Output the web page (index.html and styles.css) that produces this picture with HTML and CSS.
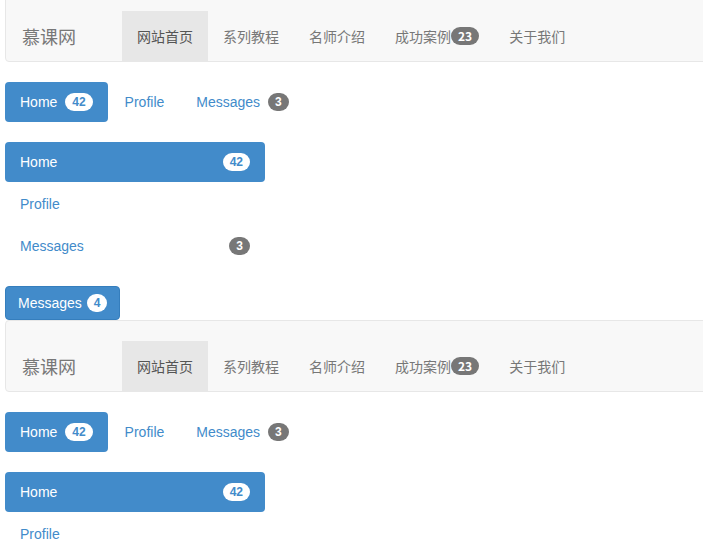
FILE: index.html
```html
<!DOCTYPE html>
<html lang="zh-CN">

<head>
    <meta charset="UTF-8">
    <meta name="viewport" content="width=device-width, initial-scale=1.0">
    <title>徽章</title>
    <link rel="stylesheet" href="styles.css">
</head>

<body>

    <nav class="navbar first">
        <a class="brand" href="#">慕课网</a>
        <ul class="navbar-nav">
            <li class="active"><a href="#">网站首页</a></li>
            <li><a href="#">系列教程</a></li>
            <li><a href="#">名师介绍</a></li>
            <li><a href="#">成功案例<span class="badge">23</span></a></li>
            <li><a href="#">关于我们</a></li>
        </ul>
    </nav>

    <ul class="pills">
        <li class="active"><a href="#">Home <span class="badge">42</span></a></li>
        <li><a href="#">Profile</a></li>
        <li><a href="#">Messages <span class="badge">3</span></a></li>
    </ul>

    <ul class="pills stacked">
        <li class="active"><a href="#">Home <span class="badge">42</span></a></li>
        <li><a href="#">Profile</a></li>
        <li><a href="#">Messages <span class="badge">3</span></a></li>
    </ul>

    <button class="btn" type="button">Messages <span class="badge">4</span></button>

    <nav class="navbar">
        <a class="brand" href="#">慕课网</a>
        <ul class="navbar-nav">
            <li class="active"><a href="#">网站首页</a></li>
            <li><a href="#">系列教程</a></li>
            <li><a href="#">名师介绍</a></li>
            <li><a href="#">成功案例<span class="badge">23</span></a></li>
            <li><a href="#">关于我们</a></li>
        </ul>
    </nav>

    <ul class="pills">
        <li class="active"><a href="#">Home <span class="badge">42</span></a></li>
        <li><a href="#">Profile</a></li>
        <li><a href="#">Messages <span class="badge">3</span></a></li>
    </ul>

    <ul class="pills stacked">
        <li class="active"><a href="#">Home <span class="badge">42</span></a></li>
        <li><a href="#">Profile</a></li>
        <li><a href="#">Messages <span class="badge">3</span></a></li>
    </ul>

</body>

</html>
```

FILE: styles.css
```css
:root {
    --primary: #428bca;
    --primary-border: #357ebd;
    --badge: #777;
}
* {
    box-sizing: border-box;
}
html,
body {
    overflow: hidden;
}
body {
    margin: 0 0 0 5px;
    font-family: "Liberation Sans", "Noto Sans CJK SC", sans-serif;
    font-size: 14px;
    line-height: 20px;
    color: #333;
    background: #fff;
}
a {
    color: var(--primary);
    text-decoration: none;
}
ul {
    list-style: none;
    margin: 0;
    padding: 0;
}

/* badge */
.badge {
    display: inline-block;
    min-width: 10px;
    padding: 3px 7px;
    font-size: 12px;
    font-weight: bold;
    line-height: 1;
    color: #fff;
    text-align: center;
    white-space: nowrap;
    vertical-align: middle;
    background-color: var(--badge);
    border-radius: 10px;
}

/* navbar */
.navbar {
    display: flex;
    align-items: flex-end;
    padding-top: 20px;
    margin-right: -4px;
    margin-bottom: 20px;
    background-color: #f8f8f8;
    border: 1px solid #e7e7e7;
    border-radius: 4px;
    font-family: "Noto Sans CJK SC", "Liberation Sans", sans-serif;
}
.navbar.first {
    margin-top: -10px;
}
.navbar .brand {
    display: flex;
    align-items: center;
    width: 116px;
    height: 50px;
    padding: 0 15px 1px 16px;
    font-size: 18px;
    color: #777;
}
.navbar-nav {
    display: flex;
}
.navbar-nav a {
    display: flex;
    align-items: center;
    height: 50px;
    padding: 0 15px 1px;
    color: #777;
}
.navbar-nav .active a {
    color: #555;
    background-color: #e7e7e7;
}

/* pills */
.pills {
    display: flex;
    margin-bottom: 20px;
}
.pills li + li {
    margin-left: 2px;
}
.pills a {
    display: flex;
    align-items: center;
    height: 40px;
    padding: 0 15px;
    border-radius: 4px;
    white-space: pre;
}
.pills a .badge {
    margin-left: 4px;
}
.pills .active a {
    color: #fff;
    background-color: var(--primary);
}
.pills .active a .badge {
    color: var(--primary);
    background-color: #fff;
}
.pills.stacked {
    flex-direction: column;
    width: 260px;
}
.pills.stacked li + li {
    margin-left: 0;
    margin-top: 2px;
}
.pills.stacked a {
    justify-content: space-between;
}

/* button */
.btn {
    display: block;
    height: 34px;
    padding: 0 12px;
    margin: 0;
    font-family: inherit;
    font-size: 14px;
    line-height: 20px;
    color: #fff;
    background-color: var(--primary);
    border: 1px solid var(--primary-border);
    border-radius: 4px;
}
.btn .badge {
    position: relative;
    top: -1px;
    margin-left: 1px;
    color: var(--primary);
    background-color: #fff;
}
```
